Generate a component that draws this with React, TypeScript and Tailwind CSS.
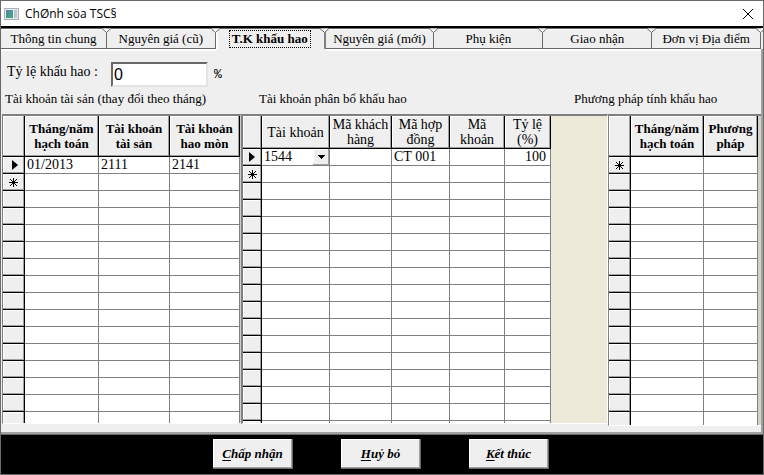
import { useState } from "react";
import type { ReactNode } from "react";
import clsx from "clsx";

const TABS = [
  "Thông tin chung",
  "Nguyên giá (cũ)",
  "T.K khấu hao",
  "Nguyên giá (mới)",
  "Phụ kiện",
  "Giao nhận",
  "Đơn vị Địa điểm",
];

const serif = "font-['Liberation_Serif',serif]";
const raised = "bg-[#efefef] shadow-[inset_-1px_-1px_0_#a0a0a0,inset_1px_1px_0_#fff]";

type Column = { title: string[]; width: string; align?: "right" };

type GridProps = {
  label: string;
  columns: Column[];
  markerWidth: string;
  rows: ReactNode[][];
  total: number;
  bold?: boolean;
  headHeight: string;
};

function CurrentMark() {
  return (
    <svg width="6" height="10" viewBox="0 0 6 10" className="ml-auto mr-1.5 block">
      <path d="M0 0L6 5L0 10Z" fill="#000" />
    </svg>
  );
}

function NewMark() {
  return (
    <svg width="9" height="9" viewBox="0 0 9 9" className="mx-auto block" shapeRendering="crispEdges">
      <path d="M4.5 0V9M0 4.5H9" stroke="#000" />
      <path d="M1 1h1v1h1v1h1v1h1v1h1v1h1v1h1v1h-1v-1h-1v-1h-1v-1h-1v-1h-1v-1h-1v-1h-1zM8 1h-1v1h-1v1h-1v1h-1v1h-1v1h-1v1h-1v1h1v-1h1v-1h1v-1h1v-1h1v-1h1v-1h1z" fill="#000" />
    </svg>
  );
}

function DataGrid({ label, columns, markerWidth, rows, total, bold, headHeight }: GridProps) {
  return (
    <table aria-label={label} className="w-max table-fixed border-separate border-spacing-0 bg-white text-sm leading-4">
      <thead>
        <tr className={headHeight}>
          <th className={clsx("border-b border-r border-black p-0", raised, markerWidth)} />
          {columns.map((c) => (
            <th
              key={c.title.join(" ")}
              scope="col"
              className={clsx(
                "whitespace-nowrap border-b border-r border-black p-0 text-center leading-[15px]",
                raised,
                c.width,
                bold ? "text-[13px] font-bold" : "font-normal",
              )}
            >
              {c.title.map((line) => (
                <span key={line} className="block leading-[15px]">{line}</span>
              ))}
            </th>
          ))}
        </tr>
      </thead>
      <tbody>
        {Array.from({ length: total }, (_, r) => (
          <tr key={r} className="h-[17px]">
            <td className={clsx("border-b border-r border-black p-0", raised)}>
              {r < rows.length ? <CurrentMark /> : r === rows.length ? <NewMark /> : null}
            </td>
            {columns.map((c, i) => (
              <td
                key={i}
                className={clsx(
                  "h-[17px] border-b border-r border-[#808080] p-0 pl-0.5",
                  c.align === "right" && "pr-1 text-right",
                )}
              >
                {rows[r]?.[i]}
              </td>
            ))}
          </tr>
        ))}
      </tbody>
    </table>
  );
}

function AccountSelect() {
  return (
    <div className="relative h-4">
      <select aria-label="Tài khoản" defaultValue="1544" className="block h-4 w-full appearance-none bg-white p-0 text-sm leading-4 outline-none">
        <option>1544</option>
        <option>2111</option>
        <option>2141</option>
      </select>
      <span className={clsx("pointer-events-none absolute inset-y-0 right-0 flex w-4 items-center justify-center", raised)}>
        <svg width="7" height="4" viewBox="0 0 7 4" shapeRendering="crispEdges">
          <path d="M0 0H7V1H6V2H5V3H4V4H3V3H2V2H1V1H0Z" fill="#000" />
        </svg>
      </span>
    </div>
  );
}

function Tab({ title, index, active, onSelect }: { title: string; index: number; active: boolean; onSelect: () => void }) {
  return (
    <button
      type="button"
      role="tab"
      aria-selected={active}
      onClick={onSelect}
      className={clsx(
        "relative flex min-w-0 items-center justify-center whitespace-nowrap border-r border-t border-[#696969] text-[13px] leading-4",
        index === 0 ? "flex-[106]" : "flex-[109]",
        active
          ? "border-r-2 border-r-[#808080] bg-[#efefef] font-bold shadow-[inset_2px_0_0_#fff]"
          : "border-b border-b-[#696969] bg-[#efefef] shadow-[inset_0_1px_0_#fff,0_2px_0_#fff]",
      )}
    >
      <span className={clsx("px-0.5", active && "outline-1 outline-dotted outline-black")}>{title}</span>
      <svg width="9" height="5" viewBox="0 0 9 5" className="absolute -right-[5px] -top-px z-10">
        <path d="M0 0.5L4.5 5L9 0.5Z" fill="#fff" />
        <path d="M0 0.5L4.5 4.5L9 0.5" fill="none" stroke="#696969" />
      </svg>
    </button>
  );
}

function ActionButton({ accel, rest }: { accel: string; rest: string }) {
  return (
    <button
      type="button"
      className="h-[30px] w-20 border-b border-r border-[#696969] bg-[#efefef] text-[13px] font-bold italic leading-4 shadow-[inset_-1px_-1px_0_#a0a0a0,inset_1px_1px_0_#fff]"
    >
      <span className="underline underline-offset-2">{accel}</span>
      {rest}
    </button>
  );
}

export default function App() {
  const [tab, setTab] = useState(2);
  return (
    <div className={clsx("flex h-screen flex-col overflow-hidden border border-[#696969] bg-[#efefef] text-black", serif)}>
      <header className="flex h-[25px] shrink-0 items-center bg-white pl-[3px] pr-2.5">
        <svg width="15" height="12" viewBox="0 0 15 12" aria-hidden="true">
          <defs>
            <linearGradient id="pane" x1="0" y1="0" x2="1" y2="1">
              <stop offset="0" stopColor="#5a82b4" />
              <stop offset="1" stopColor="#3fae72" />
            </linearGradient>
          </defs>
          <rect x="0.5" y="0.5" width="14" height="11" fill="#e8ecef" stroke="#a9afb4" />
          <rect x="2" y="2" width="7" height="8" fill="url(#pane)" />
          <rect x="10" y="2" width="3" height="8" fill="#b9c4cc" />
        </svg>
        <h1 className="ml-1.5 flex-1 font-['Open_Sans',sans-serif] text-xs">ChØnh söa TSC§</h1>
        <button type="button" aria-label="Đóng">
          <svg width="10" height="10" viewBox="0 0 10 10">
            <path d="M0 0L10 10M10 0L0 10" stroke="#000" />
          </svg>
        </button>
      </header>

      <div role="tablist" className="flex h-[23px] shrink-0 border-t-2 border-black pr-0.5">
        {TABS.map((t, i) => (
          <Tab key={t} title={t} index={i} active={i === tab} onSelect={() => setTab(i)} />
        ))}
      </div>

      <main className="flex min-h-0 flex-1 flex-col border-b-2 border-r-2 border-[#a0a0a0]">
        <div className="flex shrink-0 items-start pl-1.5 pt-[13px]">
          <label htmlFor="rate" className="w-[104px] pt-0.5 text-sm leading-4">Tỷ lệ khấu hao :</label>
          <input
            id="rate"
            defaultValue="0"
            className="h-[25px] w-[97px] border-2 border-b-[#e3e3e3] border-l-[#696969] border-r-[#e3e3e3] border-t-[#696969] bg-white px-px font-['Liberation_Sans',sans-serif] text-base leading-5 outline-none"
          />
          <span className="ml-1.5 self-center font-['Liberation_Mono',monospace] text-[13px] leading-4">%</span>
        </div>
        <div className="flex shrink-0 whitespace-nowrap pb-[7px] pt-1 text-[13px] leading-4">
          <h2 className="w-60 pl-1">Tài khoản tài sản (thay đổi theo tháng)</h2>
          <h2 className="flex-1 pl-[18px]">Tài khoản phân bổ khấu hao</h2>
          <h2 className="w-[187px]">Phương pháp tính khấu hao</h2>
        </div>
        <div className="flex min-h-0 flex-1 pb-1.5 pl-px">
          <section className="mb-0.5 shrink-0 overflow-hidden border-b border-l border-r border-t-2 border-b-white border-l-[#808080] border-r-[#d4d0c8] border-t-[#808080]">
            <DataGrid
              label="Tài khoản tài sản"
              bold
              markerWidth="w-[22px]"
              headHeight="h-[41px]"
              columns={[
                { title: ["Tháng/năm", "hạch toán"], width: "w-[74px]" },
                { title: ["Tài khoản", "tài sản"], width: "w-[71px]" },
                { title: ["Tài khoản", "hao mòn"], width: "w-[70px]" },
              ]}
              rows={[["01/2013", "2111", "2141"]]}
              total={16}
            />
          </section>
          <section className="mb-0.5 min-w-0 flex-1 overflow-hidden border-b border-l-2 border-r border-t-2 border-b-white border-l-[#808080] border-r-white border-t-[#808080] bg-[#ece9d8]">
            <DataGrid
              label="Tài khoản phân bổ khấu hao"
              markerWidth="w-[19px]"
              headHeight="h-[33px]"
              columns={[
                { title: ["Tài khoản"], width: "w-[68px]" },
                { title: ["Mã khách", "hàng"], width: "w-[62px]" },
                { title: ["Mã hợp", "đồng"], width: "w-[58px]" },
                { title: ["Mã", "khoản"], width: "w-[55px]" },
                { title: ["Tỷ lệ", "(%)"], width: "w-[46px]", align: "right" },
              ]}
              rows={[[<AccountSelect key="account" />, "", "CT 001", "", "100"]]}
              total={17}
            />
          </section>
          <section className="shrink-0 overflow-hidden border-b border-l border-t-2 border-b-white border-l-[#808080] border-t-[#808080] bg-[#d4d0c8] pr-[3px]">
            <DataGrid
              label="Phương pháp tính khấu hao"
              bold
              markerWidth="w-[22px]"
              headHeight="h-[41px]"
              columns={[
                { title: ["Tháng/năm", "hạch toán"], width: "w-[73px]" },
                { title: ["Phương", "pháp"], width: "w-[54px]" },
              ]}
              rows={[]}
              total={16}
            />
          </section>
        </div>
      </main>

      <footer className="flex shrink-0 justify-center gap-12 border-t border-[#696969] bg-black pb-[5px] pr-0.5 pt-1">
        <ActionButton accel="C" rest="hấp nhận" />
        <ActionButton accel="H" rest="uỷ bỏ" />
        <ActionButton accel="K" rest="ết thúc" />
      </footer>
    </div>
  );
}
